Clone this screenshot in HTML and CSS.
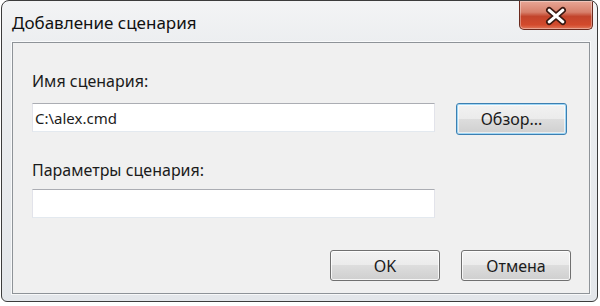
FILE: index.html
```html
<!DOCTYPE html>
<html lang="ru">
<head>
  <meta charset="UTF-8">
  <title>Добавление сценария</title>
  <link rel="stylesheet" href="styles.css">
</head>
<body>
  <div class="window">
    <div class="titlebar">
      <span class="title">Добавление сценария</span>
      <button class="close" aria-label="Закрыть">
        <svg width="74" height="29" viewBox="0 0 74 29">
          <path d="M30 9 L44 21 M44 9 L30 21" stroke="#3a1810" stroke-width="6.5" stroke-linecap="round"/>
          <path d="M30 9 L44 21 M44 9 L30 21" stroke="#ffffff" stroke-width="3.2" stroke-linecap="round"/>
        </svg>
      </button>
    </div>
    <div class="client">
      <label class="label" for="scriptName">Имя сценария:</label>
      <div class="field-row">
        <input id="scriptName" class="textbox" type="text" value="C:\alex.cmd">
        <button class="btn btn-focus">Обзор...</button>
      </div>
      <label class="label label-second" for="scriptParams">Параметры сценария:</label>
      <div class="field-row">
        <input id="scriptParams" class="textbox" type="text">
      </div>
      <div class="actions">
        <button class="btn">OK</button>
        <button class="btn">Отмена</button>
      </div>
    </div>
  </div>
</body>
</html>
```
FILE: styles.css
```css
:root {
  --frame-bg: #e3e6ea;
  --client-bg: #f0f0f0;
  --text-color: #1b1b1b;
  --btn-border: #707070;
}
body {
  margin: 0;
  background: #ffffff;
  font-family: "Noto Sans", "Open Sans", sans-serif;
  font-size: 16px;
  color: var(--text-color);
}
.window {
  box-sizing: border-box;
  width: 597px;
  height: 302px;
  margin-left: 1px;
  border: 1px solid #3c3c3c;
  border-radius: 8px 8px 6px 6px;
  background: linear-gradient(180deg, #f3f4f5 0%, #eceef0 14%, var(--frame-bg) 100%);
  display: flex;
  flex-direction: column;
  overflow: hidden;
}
.titlebar {
  height: 41px;
  display: flex;
  justify-content: space-between;
  align-items: flex-start;
  padding-left: 10px;
}
.title {
  margin-top: 10px;
  font-size: 17px;
  color: #111;
}
.close {
  width: 74px;
  height: 29px;
  margin-right: 4px;
  padding: 0;
  border: 1px solid #6a2a1e;
  border-top: none;
  border-radius: 0 0 5px 5px;
  background: linear-gradient(180deg, #e8a796 0%, #d7806b 40%, #c2442b 55%, #d34a2c 85%, #e0775a 100%);
  box-shadow: inset 0 0 0 1px rgba(255, 255, 255, 0.35);
  display: flex;
}
.client {
  box-sizing: border-box;
  flex: 1;
  margin: 0 7px 7px 10px;
  border: 1px solid #8e9398;
  box-shadow: 0 0 0 1px rgba(255, 255, 255, 0.7);
  background: var(--client-bg);
  padding: 27px 18px 0 19px;
  display: flex;
  flex-direction: column;
}
.label {
  display: block;
  line-height: 22px;
  height: 22px;
  margin-bottom: 11px;
}
.label-second {
  margin-top: 24px;
  margin-bottom: 8px;
}
.field-row {
  display: flex;
  align-items: flex-start;
  gap: 21px;
}
.textbox {
  box-sizing: border-box;
  width: 403px;
  height: 29px;
  margin: 0;
  padding: 0 0 0 2px;
  border: 1px solid #e2e3ea;
  border-top-color: #abadb3;
  border-bottom-color: #e3e9ef;
  background: #ffffff;
  font-family: inherit;
  font-size: 15px;
  color: var(--text-color);
  outline: none;
}
.btn {
  box-sizing: border-box;
  width: 110px;
  height: 31px;
  margin: 0;
  padding: 0;
  border: 1px solid var(--btn-border);
  border-radius: 3px;
  background: linear-gradient(180deg, #f2f2f2 0%, #ebebeb 49%, #dddddd 50%, #cfcfcf 100%);
  box-shadow: inset 0 0 0 1px rgba(255, 255, 255, 0.8);
  font-family: inherit;
  font-size: 16px;
  color: var(--text-color);
}
.btn-focus {
  width: 111px;
  height: 32px;
  border-color: #3c7fb1;
  box-shadow: inset 0 0 0 1px #9fd6f5, inset 0 0 0 2px rgba(255, 255, 255, 0.6);
}
.actions {
  margin-top: auto;
  margin-bottom: 12px;
  display: flex;
  justify-content: flex-end;
  gap: 21px;
}
```
